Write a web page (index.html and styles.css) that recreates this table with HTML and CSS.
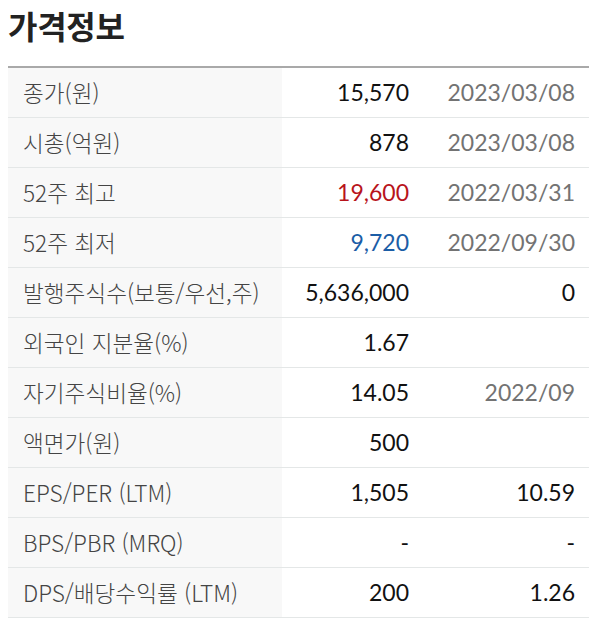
FILE: index.html
```
<!DOCTYPE html>
<html lang="ko">
<head>
<meta charset="utf-8">
<link rel="stylesheet" href="styles.css">
</head>
<body>
<h2 class="title">가격정보</h2>
<table class="price">
<tbody>
<tr><th>종가(원)</th><td class="val">15,570</td><td class="date">2023/03/08</td></tr>
<tr><th>시총(억원)</th><td class="val">878</td><td class="date">2023/03/08</td></tr>
<tr><th>52주 최고</th><td class="val up">19,600</td><td class="date">2022/03/31</td></tr>
<tr><th>52주 최저</th><td class="val down">9,720</td><td class="date">2022/09/30</td></tr>
<tr><th>발행주식수(보통/우선,주)</th><td class="val">5,636,000</td><td class="date dark">0</td></tr>
<tr><th>외국인 지분율(%)</th><td class="val">1.67</td><td class="date"></td></tr>
<tr><th>자기주식비율(%)</th><td class="val">14.05</td><td class="date">2022/09</td></tr>
<tr><th>액면가(원)</th><td class="val">500</td><td class="date"></td></tr>
<tr><th>EPS/PER (LTM)</th><td class="val">1,505</td><td class="date dark">10.59</td></tr>
<tr><th>BPS/PBR (MRQ)</th><td class="val">-</td><td class="date dark">-</td></tr>
<tr><th>DPS/배당수익률 (LTM)</th><td class="val">200</td><td class="date dark">1.26</td></tr>
</tbody>
</table>
</body>
</html>
```
FILE: styles.css
```
html, body {
  margin: 0;
  padding: 0;
  background: #fff;
}
body {
  padding: 0 11px 0 8px;
  font-family: "Noto Sans CJK KR", "Noto Sans", sans-serif;
}
.title {
  margin: 0;
  padding-top: 5px;
  height: 66px;
  box-sizing: border-box;
  font-size: 32px;
  font-weight: 700;
  color: #222;
  line-height: 40px;
  letter-spacing: -0.3px;
}
.price {
  width: 100%;
  border-collapse: collapse;
  border-top: 2px solid #a9a9a9;
}
.price tr {
  height: 50px;
  border-bottom: 1px solid #e4e7e7;
}
.price th {
  width: 259px;
  padding: 0 0 0 15px;
  background: #f8f8f8;
  text-align: left;
  font-weight: 300;
  font-size: 22.6px;
  color: #444;
  white-space: nowrap;
}
.price td {
  padding: 0 14px 0 0;
  text-align: right;
  font-family: Lato, "Noto Sans CJK KR", sans-serif;
  font-size: 23px;
  white-space: nowrap;
}
.price .val {
  width: 127px;
  color: #111;
}
.price .date {
  color: #737373;
}
.price .dark {
  color: #111;
}
.price .up {
  color: #b8141b;
}
.price .down {
  color: #1b5da6;
}
```
